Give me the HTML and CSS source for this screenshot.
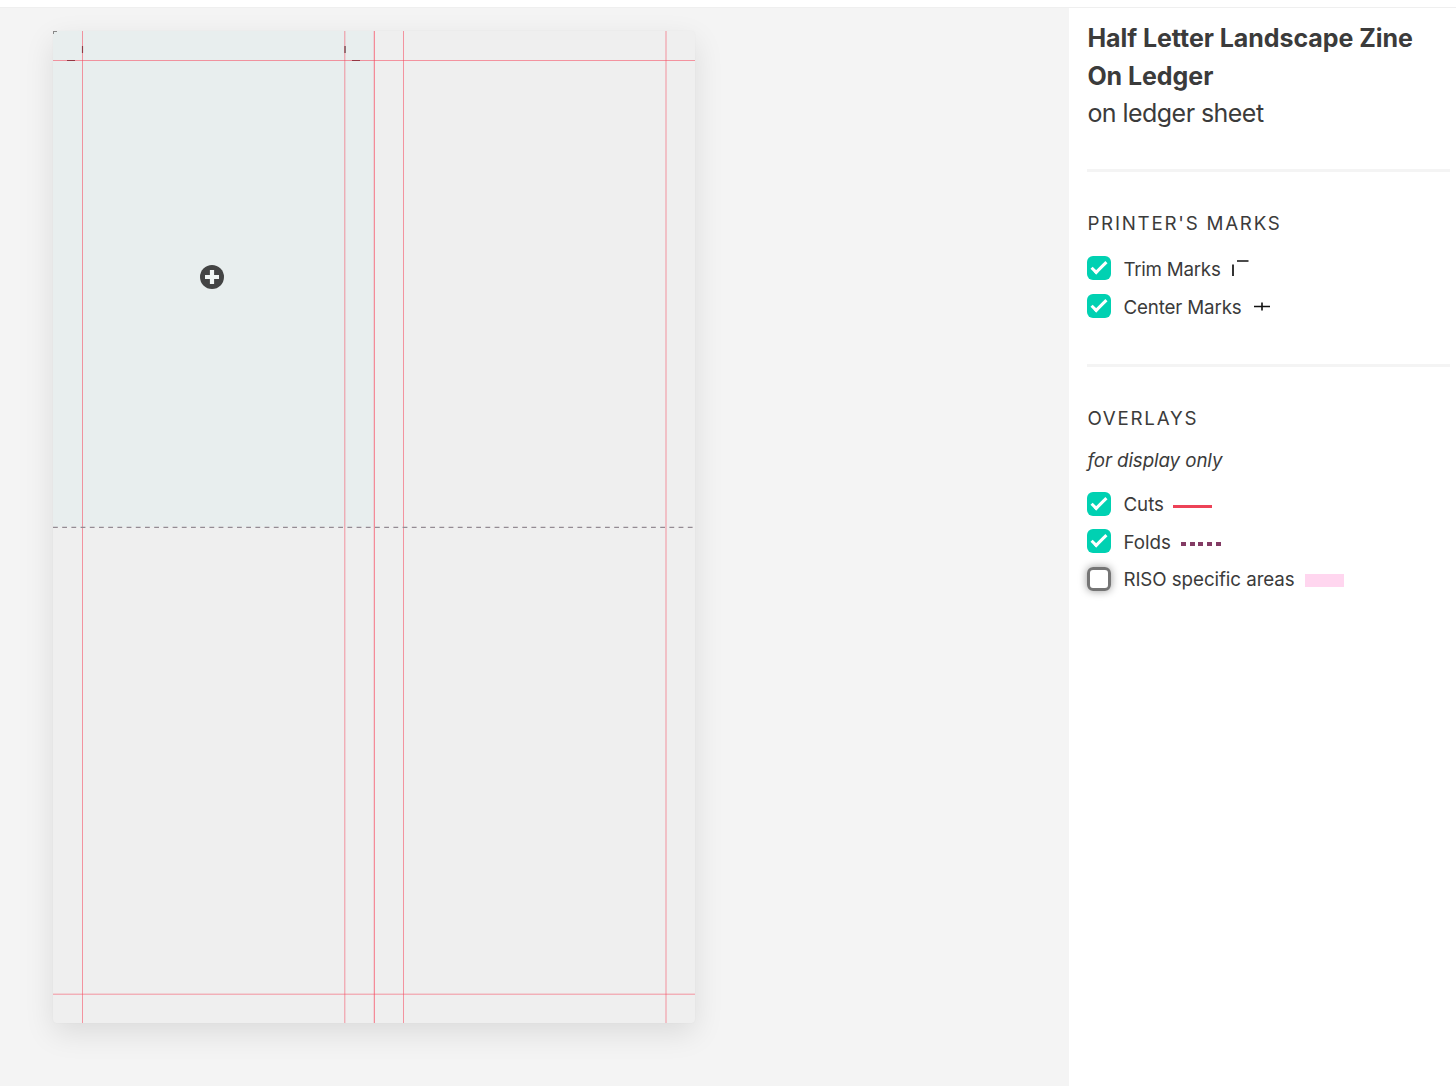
FILE: index.html
```
<!DOCTYPE html>
<html lang="en">
<head>
	<meta charset="UTF-8">
	<meta name="viewport" content="width=device-width,initial-scale=1">
	<title>Half Letter Landscape Zine On Ledger</title>
	<link rel="stylesheet" href="styles.css">
</head>
<body>

	<div class="workspace">
		<main class="stage">
			<div class="sheet">
				<button class="page" aria-label="Add image">
					<svg class="plus" viewBox="0 0 24 24" width="24" height="24">
						<circle cx="12" cy="12" r="12" fill="#434444"/>
						<path d="M12 5v14M5 12h14" stroke="#f1f6f5" stroke-width="4.2"/>
					</svg>
				</button>

				<svg class="marks" viewBox="0 0 642 992" width="642" height="992">
					<!-- trim marks -->
					<path d="M0 .5h4M.5 0v3" stroke="#888" fill="none"/>
					<path d="M29.5 15v7M292 15v7M14 29.5h8M299 29.5h8" stroke="#222" stroke-width="1.1"/>
					<!-- cuts -->
					<g class="cuts">
						<path d="M0 29.5h642M0 963.2h642"/>
						<path d="M29.5 0v992M291.8 0v992M613 0v992"/>
						<path class="cut-center" d="M321.3 0v992"/>
						<path d="M350.5 0v992"/>
					</g>
					<!-- fold -->
					<path class="fold" d="M0 496.3h640"/>
				</svg>
			</div>
		</main>

		<aside class="sidebar">
			<header class="heading">
				<h1 class="title">Half Letter Landscape Zine<br>On Ledger</h1>
				<p class="subtitle">on ledger sheet</p>
			</header>

			<section class="panel">
				<h2 class="panel-title">Printer's Marks</h2>
				<label class="option">
					<input type="checkbox" checked>
					<span class="label trim-text">Trim Marks</span>
					<svg class="key-trim" width="17" height="17" viewBox="0 0 17 17"><path d="M1 4.5v11.5M5 1h11.5" stroke="#111" stroke-width="1.7"/></svg>
				</label>
				<label class="option">
					<input type="checkbox" checked>
					<span class="label center-text">Center Marks</span>
					<svg class="key-center" width="16" height="9" viewBox="0 0 16 9"><path d="M0 4.5h16M8 .5v8" stroke="#111" stroke-width="1.6"/></svg>
				</label>
			</section>

			<section class="panel overlays">
				<h2 class="panel-title">Overlays</h2>
				<p class="note">for display only</p>
				<label class="option">
					<input type="checkbox" checked>
					<span class="label">Cuts</span>
					<span class="key-cuts"></span>
				</label>
				<label class="option">
					<input type="checkbox" checked>
					<span class="label">Folds</span>
					<span class="key-folds"></span>
				</label>
				<label class="option">
					<input type="checkbox">
					<span class="label riso-text">RISO specific areas</span>
					<span class="key-riso"></span>
				</label>
			</section>
		</aside>
	</div>

</body>
</html>
```
FILE: styles.css
```
* {
	box-sizing: border-box;
}

body {
	margin: 0;
	background: #fff;
	color: #3b3b3b;
	font-family: Inter, "Liberation Sans", sans-serif;
	font-size: 18.75px;
}

h1, h2, p {
	margin: 0;
}

.workspace {
	display: flex;
	height: 1079px;
	margin-top: 7px;
}

.stage {
	width: 1069px;
	padding: 24px 53px;
	background: #f4f4f4;
	box-shadow: inset 0 1px 0 #efefef;
	overflow: hidden;
}

.sheet {
	position: relative;
	width: 642px;
	height: 992px;
	background: #efefef;
	border-radius: 4px;
	box-shadow: 0 10px 30px rgba(10, 10, 10, .1), 0 0 2px rgba(10, 10, 10, .04);
}

.page {
	display: flex;
	align-items: center;
	justify-content: center;
	width: 321px;
	height: 496px;
	padding: 0 3px 5px 0;
	border: 0;
	background: #e8eeee;
}

.plus {
	display: block;
}

/* lines lie over the pages */
.marks {
	position: absolute;
	top: 0;
	left: 0;
	pointer-events: none;
}

.cuts path {
	stroke: #f5475c;
	stroke-opacity: .55;
}

.cuts .cut-center {
	stroke-opacity: .75;
}

.fold {
	stroke: #948b93;
	stroke-width: 1.2;
	stroke-dasharray: 4.8 4.4;
}

.sidebar {
	flex: 1;
	padding: 12px 6px 0 18.4px;
	border-top: 1px solid #efefef;
}

.title,
.subtitle {
	font-size: 25px;
	line-height: 37.5px;
	white-space: nowrap;
}

.title {
	font-weight: 700;
	letter-spacing: -.06px;
}

.subtitle {
	font-weight: 400;
	letter-spacing: -.55px;
}

.panel {
	margin-top: 36px;
	padding-top: 38px;
	border-top: 3px solid #f4f4f4;
}

.overlays {
	margin-top: 39px;
}

.panel-title {
	height: 38px;
	margin-bottom: 2px;
	font-size: 18.75px;
	font-weight: 400;
	line-height: 28px;
	letter-spacing: 1.75px;
	text-transform: uppercase;
}

.note {
	padding-top: 2.5px;
	font-style: italic;
	line-height: 28px;
	letter-spacing: -.1px;
	margin-bottom: 10px;
}

.option {
	display: flex;
	align-items: center;
	height: 37.5px;
	white-space: nowrap;
}

.label {
	padding-top: 3px;
}

.overlays .label {
	padding-top: 2px;
}

.trim-text {
	letter-spacing: -.25px;
}

.center-text {
	letter-spacing: -.15px;
}

.riso-text {
	letter-spacing: -.07px;
}

input {
	appearance: none;
	flex: none;
	width: 24px;
	height: 24px;
	margin: 0 12px 0 0;
	border: 3px solid #757575;
	border-radius: 6px;
	box-shadow: 0 0 9px rgba(0, 0, 0, .4);
}

input:checked {
	border: 0;
	background: #00d1b2;
	box-shadow: none;
}

input:checked::before {
	content: "";
	display: block;
	box-sizing: border-box;
	width: 16px;
	height: 8px;
	margin: 6px 0 0 4px;
	border: solid #fff;
	border-width: 0 0 3px 3px;
	transform: rotate(-45deg);
}

.key-trim {
	margin: 1px 0 0 11px;
}

.key-center {
	margin: 2px 0 0 12.5px;
}

.key-cuts {
	width: 39px;
	height: 3px;
	margin: 5px 0 0 9px;
	background: #ed4257;
}

.key-folds {
	width: 40px;
	height: 4px;
	margin: 5px 0 0 10px;
	background: repeating-linear-gradient(90deg, #833b64 0 5px, transparent 5px 8.7px);
}

.key-riso {
	width: 39px;
	height: 13px;
	margin: 4px 0 0 10px;
	background: #ffd6ef;
}
```
